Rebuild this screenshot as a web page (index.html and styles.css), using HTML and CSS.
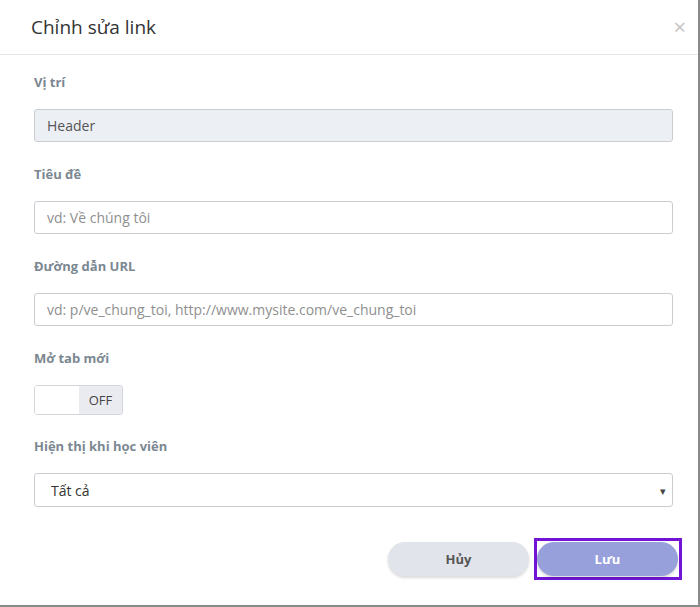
FILE: index.html
```html
<!DOCTYPE html>
<html lang="vi">
<head>
    <meta charset="UTF-8">
    <meta name="viewport" content="width=device-width, initial-scale=1.0">
    <title>Chỉnh sửa link</title>
    <link rel="stylesheet" href="styles.css">
</head>
<body>

    <div class="modal">
        <div class="modal-header">
            <h2>Chỉnh sửa link</h2>
            <span class="close">&times;</span>
        </div>

        <div class="modal-body">
            <div class="field">
                <label>Vị trí</label>
                <input type="text" class="input readonly" value="Header" readonly>
            </div>

            <div class="field">
                <label>Tiêu đề</label>
                <input type="text" class="input" placeholder="vd: Về chúng tôi">
            </div>

            <div class="field">
                <label>Đường dẫn URL</label>
                <input type="text" class="input" placeholder="vd: p/ve_chung_toi, http://www.mysite.com/ve_chung_toi">
            </div>

            <div class="field">
                <label>Mở tab mới</label>
                <div class="switch">
                    <span class="knob"></span>
                    <span class="state">OFF</span>
                </div>
            </div>

            <div class="field">
                <label>Hiện thị khi học viên</label>
                <div class="select">
                    <span>Tất cả</span>
                    <span class="caret">&#9662;</span>
                </div>
            </div>
        </div>

        <div class="modal-footer">
            <button class="btn btn-cancel">Hủy</button>
            <div class="focus-ring">
                <button class="btn btn-save">Lưu</button>
            </div>
        </div>
    </div>

</body>
</html>
```

FILE: styles.css
```css
/* Reset CSS */
* {
    margin: 0;
    padding: 0;
    box-sizing: border-box;
}

body {
    font-family: "Open Sans", Arial, sans-serif;
    background-color: #8a8a8a;
    color: #333;
}

.modal {
    width: 698px;
    height: 605px;
    background-color: #fff;
}

.modal-header {
    height: 55px;
    padding: 14px 31px 0;
    border-bottom: 1px solid #e8e8e8;
    display: flex;
    justify-content: space-between;
}

.modal-header h2 {
    font-size: 19px;
    font-weight: 400;
    color: #333;
    line-height: 26px;
}

.close {
    font-size: 22px;
    line-height: 16px;
    color: #c4c4c4;
    margin-top: 4px;
    margin-right: -19px;
}

.modal-body {
    padding: 18px 25px 0 34px;
}

.field {
    margin-bottom: 23px;
}

label {
    display: block;
    font-size: 13px;
    font-weight: 700;
    line-height: 18px;
    color: #7b8791;
    margin-bottom: 18px;
}

.input {
    display: block;
    width: 100%;
    height: 33px;
    padding: 0 12px;
    border: 1px solid #c9cdd2;
    border-radius: 3px;
    font-family: inherit;
    font-size: 14px;
    color: #555;
    background-color: #fff;
}

.input::placeholder {
    color: #8f8f8f;
}

.input.readonly {
    background-color: #eceff4;
    color: #555;
}

.switch {
    display: flex;
    width: 89px;
    height: 30px;
    border: 1px solid #d3d6db;
    border-radius: 3px;
    overflow: hidden;
}

.switch .knob {
    width: 44px;
    background-color: #fff;
}

.switch .state {
    flex: 1;
    background-color: #e9ebf0;
    font-size: 13px;
    color: #444;
    display: flex;
    align-items: center;
    justify-content: center;
}

.field:nth-child(4) {
    margin-bottom: 22px;
}

.select {
    height: 34px;
    border: 1px solid #c9cdd2;
    border-radius: 3px;
    display: flex;
    align-items: center;
    justify-content: space-between;
    padding: 0 6px 0 16px;
    font-size: 14px;
    color: #333;
}

.caret {
    font-size: 11px;
    color: #444;
}

.modal-footer {
    display: flex;
    justify-content: flex-end;
    align-items: center;
    gap: 5px;
    padding: 8px 16px 0 0;
}

.btn {
    width: 141px;
    height: 34px;
    border: none;
    border-radius: 17px;
    font-family: inherit;
    font-size: 13px;
    font-weight: 700;
    cursor: pointer;
    box-shadow: 0 2px 3px rgba(0, 0, 0, 0.15);
}

.btn-cancel {
    background-color: #e1e4ea;
    color: #555;
}

.focus-ring {
    border: 3px solid #7214d6;
    padding: 1px 1px 1px 0;
    display: flex;
}

.btn-save {
    background-color: #98a0dc;
    color: #fff;
}
```
